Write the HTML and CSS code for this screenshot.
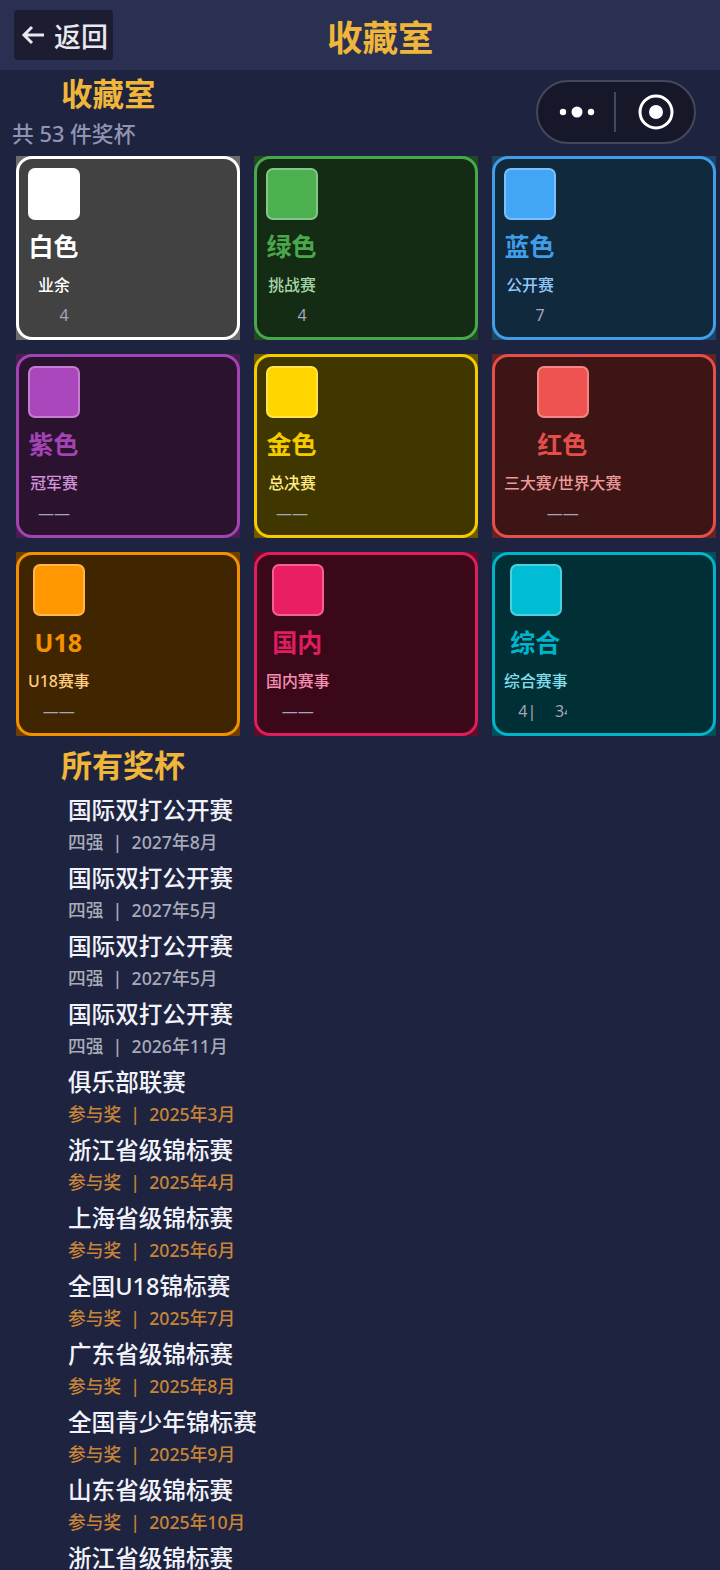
FILE: index.html
```html
<!DOCTYPE html>
<html lang="zh-CN">
<head>
    <meta charset="UTF-8">
    <meta name="viewport" content="width=device-width, initial-scale=1.0">
    <title>收藏室</title>
    <link rel="stylesheet" href="styles.css">
</head>
<body>
    <header class="nav-bar">
        <div class="back-btn">
            <svg class="back-arrow" width="24" height="20" viewBox="0 0 24 20"><path d="M23 10H3M11 2l-8 8 8 8" fill="none" stroke="#e8e8ee" stroke-width="3"/></svg>
            <span>返回</span>
        </div>
        <div class="nav-title">收藏室</div>
    </header>

    <div class="capsule">
        <svg class="capsule-dots" width="36" height="12" viewBox="0 0 36 12"><circle cx="4" cy="6" r="3.2" fill="#fff"/><circle cx="18" cy="6" r="5.5" fill="#fff"/><circle cx="32" cy="6" r="3.2" fill="#fff"/></svg>
        <span class="capsule-line"></span>
        <svg class="capsule-target" width="36" height="36" viewBox="0 0 36 36"><circle cx="18" cy="18" r="16" fill="none" stroke="#fff" stroke-width="3"/><circle cx="18" cy="18" r="7" fill="#fff"/></svg>
    </div>

    <main>
        <section class="summary">
            <h1>收藏室</h1>
            <p>共 53 件奖杯</p>
        </section>

        <section class="card-grid">
            <div class="card white"><div class="card-inner"><div class="col">
                <div class="swatch"></div><div class="name">白色</div><div class="sub">业余</div><div class="count num">4</div>
            </div></div></div>
            <div class="card green"><div class="card-inner"><div class="col">
                <div class="swatch"></div><div class="name">绿色</div><div class="sub">挑战赛</div><div class="count num">4</div>
            </div></div></div>
            <div class="card blue"><div class="card-inner"><div class="col">
                <div class="swatch"></div><div class="name">蓝色</div><div class="sub">公开赛</div><div class="count num">7</div>
            </div></div></div>
            <div class="card purple"><div class="card-inner"><div class="col">
                <div class="swatch"></div><div class="name">紫色</div><div class="sub">冠军赛</div><div class="count">——</div>
            </div></div></div>
            <div class="card gold"><div class="card-inner"><div class="col">
                <div class="swatch"></div><div class="name">金色</div><div class="sub">总决赛</div><div class="count">——</div>
            </div></div></div>
            <div class="card red"><div class="card-inner"><div class="col">
                <div class="swatch"></div><div class="name">红色</div><div class="sub">三大赛/世界大赛</div><div class="count">——</div>
            </div></div></div>
            <div class="card orange"><div class="card-inner"><div class="col">
                <div class="swatch"></div><div class="name">U18</div><div class="sub">U18赛事</div><div class="count">——</div>
            </div></div></div>
            <div class="card pink"><div class="card-inner"><div class="col">
                <div class="swatch"></div><div class="name">国内</div><div class="sub">国内赛事</div><div class="count">——</div>
            </div></div></div>
            <div class="card cyan"><div class="card-inner"><div class="col">
                <div class="swatch"></div><div class="name">综合</div><div class="sub">综合赛事</div><div class="count clip">4| &nbsp;&nbsp;&nbsp;&nbsp;34</div>
            </div></div></div>
        </section>

        <section class="all">
            <h2>所有奖杯</h2>
            <div class="trophy"><div class="t-name">国际双打公开赛</div><div class="t-meta">四强 &nbsp;|&nbsp; 2027年8月</div></div>
            <div class="trophy"><div class="t-name">国际双打公开赛</div><div class="t-meta">四强 &nbsp;|&nbsp; 2027年5月</div></div>
            <div class="trophy"><div class="t-name">国际双打公开赛</div><div class="t-meta">四强 &nbsp;|&nbsp; 2027年5月</div></div>
            <div class="trophy"><div class="t-name">国际双打公开赛</div><div class="t-meta">四强 &nbsp;|&nbsp; 2026年11月</div></div>
            <div class="trophy"><div class="t-name">俱乐部联赛</div><div class="t-meta join">参与奖 &nbsp;|&nbsp; 2025年3月</div></div>
            <div class="trophy"><div class="t-name">浙江省级锦标赛</div><div class="t-meta join">参与奖 &nbsp;|&nbsp; 2025年4月</div></div>
            <div class="trophy"><div class="t-name">上海省级锦标赛</div><div class="t-meta join">参与奖 &nbsp;|&nbsp; 2025年6月</div></div>
            <div class="trophy"><div class="t-name">全国U18锦标赛</div><div class="t-meta join">参与奖 &nbsp;|&nbsp; 2025年7月</div></div>
            <div class="trophy"><div class="t-name">广东省级锦标赛</div><div class="t-meta join">参与奖 &nbsp;|&nbsp; 2025年8月</div></div>
            <div class="trophy"><div class="t-name">全国青少年锦标赛</div><div class="t-meta join">参与奖 &nbsp;|&nbsp; 2025年9月</div></div>
            <div class="trophy"><div class="t-name">山东省级锦标赛</div><div class="t-meta join">参与奖 &nbsp;|&nbsp; 2025年10月</div></div>
            <div class="trophy"><div class="t-name">浙江省级锦标赛</div><div class="t-meta join">参与奖 &nbsp;|&nbsp; 2025年11月</div></div>
        </section>
    </main>
</body>
</html>
```
FILE: styles.css
```css
html, body {
    height: 1570px;
    overflow: hidden;
}

body {
    margin: 0;
    position: relative;
    background-color: #1e2340;
    color: #fff;
    font-family: "Noto Sans", "Noto Sans CJK SC", sans-serif;
}

.nav-bar {
    height: 70px;
    background-color: #2a3052;
    display: flex;
    align-items: center;
    padding-left: 14px;
    position: relative;
}

.back-btn {
    width: 99px;
    height: 50px;
    box-sizing: border-box;
    padding-left: 7px;
    background-color: #1c1d30;
    border-radius: 4px;
    display: flex;
    align-items: center;
    gap: 9px;
    font-size: 27px;
    font-weight: 500;
    color: #e8e8ee;
}

.nav-title {
    position: absolute;
    left: 327px;
    top: 11px;
    font-size: 35.5px;
    line-height: 52px;
    font-weight: 700;
    color: #efb63a;
}

.capsule {
    position: absolute;
    left: 536px;
    top: 80px;
    width: 159.5px;
    height: 64px;
    box-sizing: border-box;
    border: 2px solid #45475c;
    border-radius: 32px;
    background-color: #161729;
    display: flex;
    align-items: center;
}

.capsule-dots {
    margin-left: 21px;
}

.capsule-line {
    width: 2px;
    height: 40px;
    margin-left: 19px;
    background-color: #45475c;
}

.capsule-target {
    margin-left: 22px;
}

.summary {
    height: 86px;
}

.summary h1 {
    margin: 0;
    padding: 6px 0 0 61px;
    font-size: 31.5px;
    line-height: 36px;
    font-weight: 700;
    color: #efb63a;
}

.summary p {
    margin: 8px 0 0 12px;
    font-size: 21.8px;
    line-height: 28px;
    font-weight: 500;
    color: #9094b4;
}

.card-grid {
    display: grid;
    grid-template-columns: repeat(3, 224px);
    grid-auto-rows: 184px;
    gap: 14px;
    padding-left: 16px;
}

.card {
    --tone: #fff;
    --fill: #424242;
    --soft: #fff;
    --line: color-mix(in srgb, var(--tone) 94%, var(--fill));
    background-color: color-mix(in srgb, var(--tone) 22%, var(--fill));
}

.card-inner {
    height: 100%;
    box-sizing: border-box;
    border: 3px solid var(--line);
    border-radius: 16px;
    background-color: var(--fill);
    padding: 9px;
}

.col {
    display: inline-flex;
    flex-direction: column;
    align-items: center;
    max-width: 100%;
}

.swatch {
    width: 52px;
    height: 52px;
    box-sizing: border-box;
    border: 2px solid color-mix(in srgb, var(--tone) 70%, #fff);
    border-radius: 7px;
    background-color: var(--tone);
}

.name {
    margin-top: 7px;
    margin-left: -1px;
    font-size: 25px;
    line-height: 38px;
    font-weight: 700;
    color: var(--line);
}

.sub {
    margin-top: 9px;
    font-size: 15.9px;
    line-height: 22px;
    font-weight: 500;
    white-space: nowrap;
    color: var(--soft);
}

.count {
    margin-top: 8px;
    font-size: 16px;
    line-height: 22px;
    color: #a4a6bb;
    white-space: nowrap;
}

.count.num {
    padding-left: 20px;
}

.count.clip {
    width: 49px;
    padding-left: 14px;
    overflow: hidden;
    word-spacing: -0.4px;
}

.white { --tone: #fff; --fill: #424242; --soft: #fff; --line: #fff; }
.green { --tone: #4caf50; --fill: #142b14; --soft: #a5d6a7; }
.blue { --tone: #42a5f5; --fill: #11293d; --soft: #90caf9; }
.purple { --tone: #ab47bc; --fill: #2b122f; --soft: #ce93d8; }
.gold { --tone: #ffd600; --fill: #403600; --soft: #ffeb80; }
.red { --tone: #ef5350; --fill: #3c1514; --soft: #ef9a9a; }
.orange { --tone: #ff9800; --fill: #402600; --soft: #ffcc80; }
.pink { --tone: #e91e63; --fill: #3a0819; --soft: #f48fb1; }
.cyan { --tone: #00bcd4; --fill: #002f35; --soft: #80deea; }

.all h2 {
    margin: 8px 0 0 61px;
    font-size: 31px;
    line-height: 42px;
    font-weight: 700;
    color: #efb63a;
}

.trophy {
    padding-left: 68px;
    height: 68px;
}

.all h2 + .trophy {
    margin-top: 6px;
}

.t-name {
    font-size: 23.6px;
    line-height: 36px;
    font-weight: 500;
    color: #f2f3fa;
}

.t-meta {
    font-size: 17.7px;
    line-height: 28px;
    font-weight: 500;
    color: #a9abb8;
}

.t-meta.join {
    color: #c98536;
}
```
